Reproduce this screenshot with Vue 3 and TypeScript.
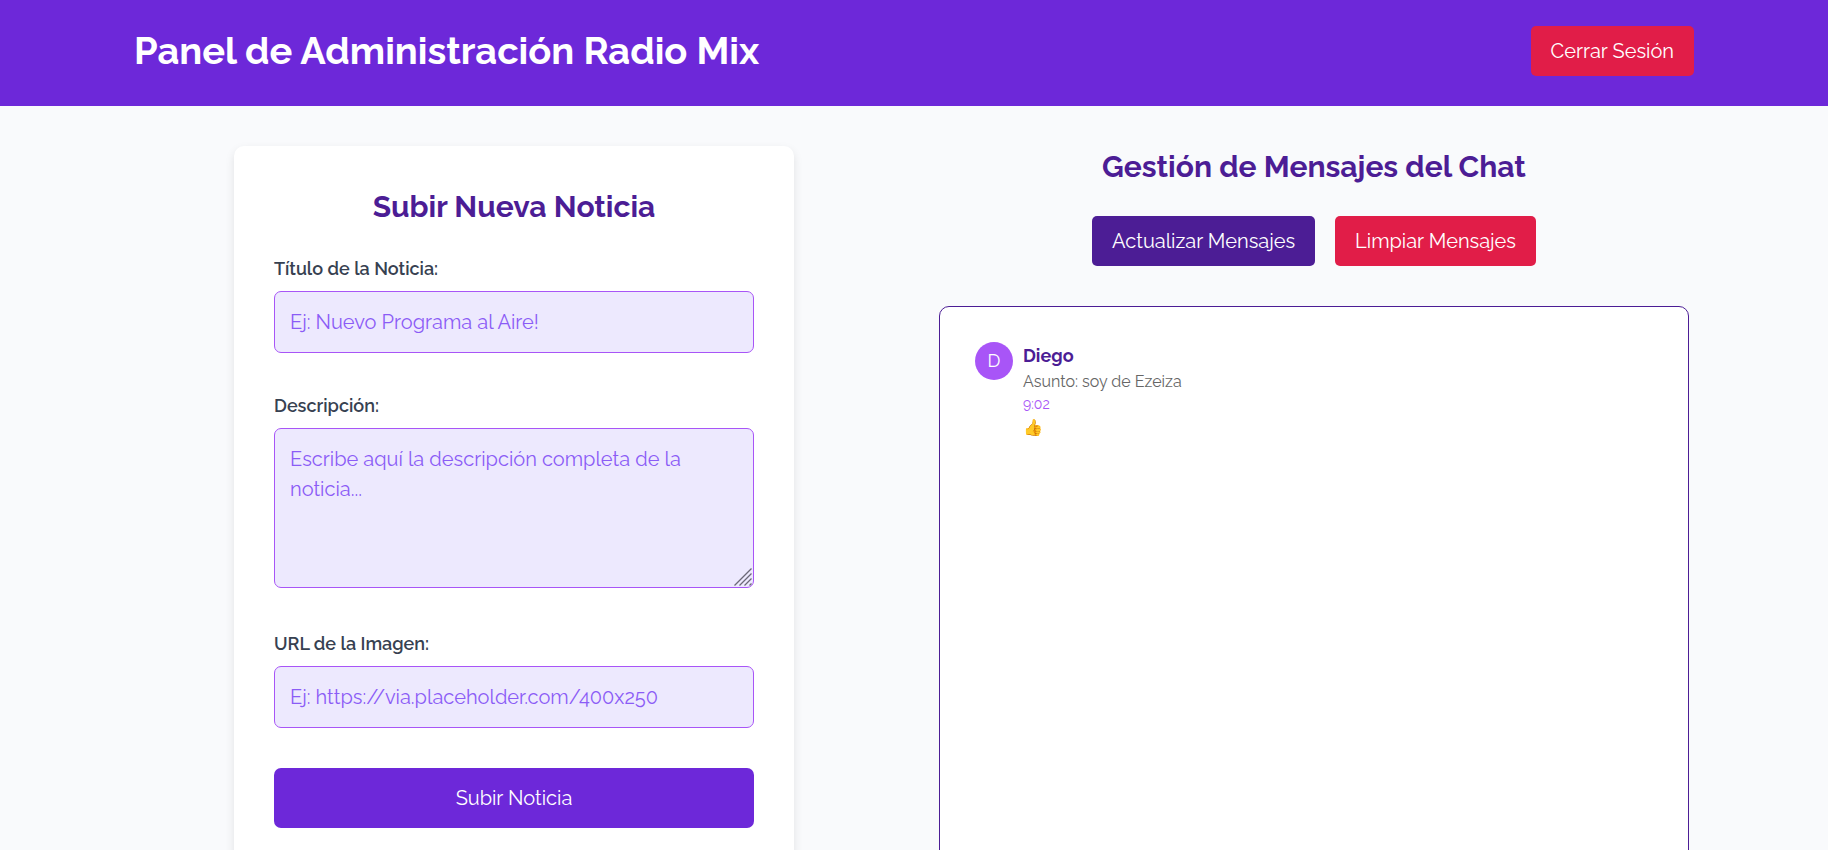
<script setup lang="ts">
import { ref } from 'vue'

interface ChatMessage {
  id: number
  name: string
  subject: string
  time: string
  text: string
}

const title = ref('')
const description = ref('')
const imageUrl = ref('')

const messages = ref<ChatMessage[]>([
  { id: 1, name: 'Diego', subject: 'soy de Ezeiza', time: '9:02', text: '👍' },
])

function submitNews() {
  title.value = ''
  description.value = ''
  imageUrl.value = ''
}

function refreshMessages() {
  messages.value = [...messages.value]
}

function clearMessages() {
  messages.value = []
}
</script>

<template>
  <div class="page">
    <header class="header">
      <div class="header-inner">
        <h1>Panel de Administración Radio Mix</h1>
        <button type="button" class="btn btn-danger">Cerrar Sesión</button>
      </div>
    </header>

    <main class="main">
      <section class="column">
        <form class="card" @submit.prevent="submitNews">
          <h2>Subir Nueva Noticia</h2>
          <div class="field">
            <label for="title">Título de la Noticia:</label>
            <input id="title" v-model="title" type="text" placeholder="Ej: Nuevo Programa al Aire!" />
          </div>
          <div class="field">
            <label for="description">Descripción:</label>
            <div class="textarea-wrap">
              <textarea
                id="description"
                v-model="description"
                placeholder="Escribe aquí la descripción completa de la noticia..."
              ></textarea>
              <svg class="grip" viewBox="0 0 18 18" aria-hidden="true">
                <path d="M0.5 17.5 17.5 0.5M5.5 17.5 17.5 5.5M10.5 17.5 17.5 10.5M15.5 17.5 17.5 15.5" />
              </svg>
            </div>
          </div>
          <div class="field">
            <label for="image">URL de la Imagen:</label>
            <input id="image" v-model="imageUrl" type="url" placeholder="Ej: https://via.placeholder.com/400x250" />
          </div>
          <button type="submit" class="btn btn-submit">Subir Noticia</button>
        </form>
      </section>

      <section class="column">
        <h2>Gestión de Mensajes del Chat</h2>
        <div class="actions">
          <button type="button" class="btn btn-dark" @click="refreshMessages">Actualizar Mensajes</button>
          <button type="button" class="btn btn-danger" @click="clearMessages">Limpiar Mensajes</button>
        </div>
        <div class="messages">
          <article v-for="m in messages" :key="m.id" class="message">
            <span class="avatar">{{ m.name.charAt(0) }}</span>
            <div class="body">
              <strong class="name">{{ m.name }}</strong>
              <span class="subject">Asunto: {{ m.subject }}</span>
              <time class="time">{{ m.time }}</time>
              <span class="text">{{ m.text }}</span>
            </div>
          </article>
        </div>
      </section>
    </main>
  </div>
</template>

<style>
body {
  margin: 0;
  background: #f9fafc;
}
</style>

<style scoped>
.page {
  height: 100vh;
  overflow: hidden;
  font-family: Raleway, Lato, 'Open Sans', sans-serif;
  font-size: 20px;
  line-height: 30px;
  font-feature-settings: 'onum' 1, 'lnum' 0;
  color: #374151;
}

.page * {
  box-sizing: border-box;
}

.header {
  background: #6d28d9;
  color: #fff;
}

.header-inner {
  display: flex;
  align-items: center;
  justify-content: space-between;
  max-width: 1600px;
  margin: 0 auto;
  padding: 26px 20px 30px;
}

h1 {
  margin: 0;
  font-size: 38px;
  line-height: 50px;
  font-weight: 700;
}

h2 {
  margin: 0;
  font-size: 30px;
  line-height: 42px;
  font-weight: 700;
  text-align: center;
  color: #4c1d95;
}

.btn {
  padding: 10px 20px;
  border: 0;
  border-radius: 5px;
  font: inherit;
  color: #fff;
  cursor: pointer;
}

.btn-danger {
  background: #e11d48;
}

.btn-dark {
  background: #4c1d95;
}

.btn-submit {
  width: 100%;
  padding: 15px;
  border-radius: 7px;
  background: #6d28d9;
}

.main {
  display: flex;
  max-width: 1600px;
  margin: 0 auto;
  padding-top: 40px;
}

.column {
  flex: 1;
  min-width: 0;
  padding: 0 25px;
}

.card {
  max-width: 560px;
  margin: 0 auto;
  padding: 40px;
  border-radius: 10px;
  background: #fff;
  box-shadow: 0 4px 10px rgba(0, 0, 0, 0.1);
}

.card h2 {
  margin-bottom: 28px;
}

.field {
  display: flex;
  flex-direction: column;
  margin-bottom: 40px;
}

label {
  margin-bottom: 10px;
  font-size: 18px;
  line-height: 25px;
  font-weight: 600;
}

input,
textarea {
  width: 100%;
  padding: 15px;
  border: 1px solid #a855f7;
  border-radius: 7px;
  background: #ede9fe;
  font: inherit;
  font-feature-settings: inherit;
  color: #4c1d95;
}

input {
  height: 62px;
}

.textarea-wrap {
  position: relative;
  margin-bottom: 3px;
}

textarea {
  display: block;
  height: 160px;
  resize: vertical;
}

textarea::-webkit-resizer {
  background: transparent;
}

.grip {
  position: absolute;
  right: 2px;
  bottom: 2px;
  width: 18px;
  height: 18px;
  fill: none;
  stroke: #6b6878;
  stroke-width: 1.3;
  pointer-events: none;
}

input::placeholder,
textarea::placeholder {
  color: #8b5cf6;
  opacity: 1;
}

.actions {
  display: flex;
  justify-content: center;
  gap: 20px;
  margin: 28px 0 40px;
}

.messages {
  height: 800px;
  padding: 35px;
  border: 1px solid #4c1d95;
  border-radius: 10px;
  background: #fff;
}

.message {
  display: flex;
  gap: 10px;
}

.avatar {
  flex: none;
  width: 38px;
  height: 38px;
  border-radius: 50%;
  background: #a855f7;
  color: #fff;
  font-size: 18px;
  line-height: 38px;
  text-align: center;
}

.body {
  display: flex;
  flex-direction: column;
}

.name {
  font-size: 18px;
  line-height: 28px;
  color: #4c1d95;
}

.subject {
  font-size: 16px;
  line-height: 24px;
  color: #666;
}

.time {
  font-size: 14px;
  line-height: 21px;
  color: #a855f7;
}

.text {
  font-size: 16px;
  line-height: 26px;
}
</style>
